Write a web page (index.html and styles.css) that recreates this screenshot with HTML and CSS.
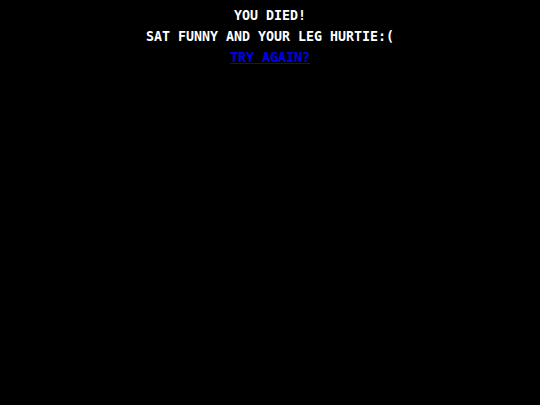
FILE: index.html
```html
<!doctype html>
<html>
<head>
<meta charset="utf-8">
<title>You died</title>
<link rel="stylesheet" href="styles.css">
</head>
<body>
<div class="dead">
	<p>You died!</p>
	<p>Sat funny and your leg hurtie:(</p>
	<p><a href="javascript:;" class="again">Try again?</a></p>
</div>
</body>
</html>
```

FILE: styles.css
```css
*{margin:0; padding:0;}
html,body{height:100%; background:#000;}
body{font-family:"DejaVu Sans Mono","Liberation Mono",monospace; font-weight:bold; font-size:13.3px; color:#fff;}
.dead{padding-top:5px; text-align:center; text-transform:uppercase; line-height:21px;}
.dead .again{color:#0000ee; text-decoration:underline;}
```
